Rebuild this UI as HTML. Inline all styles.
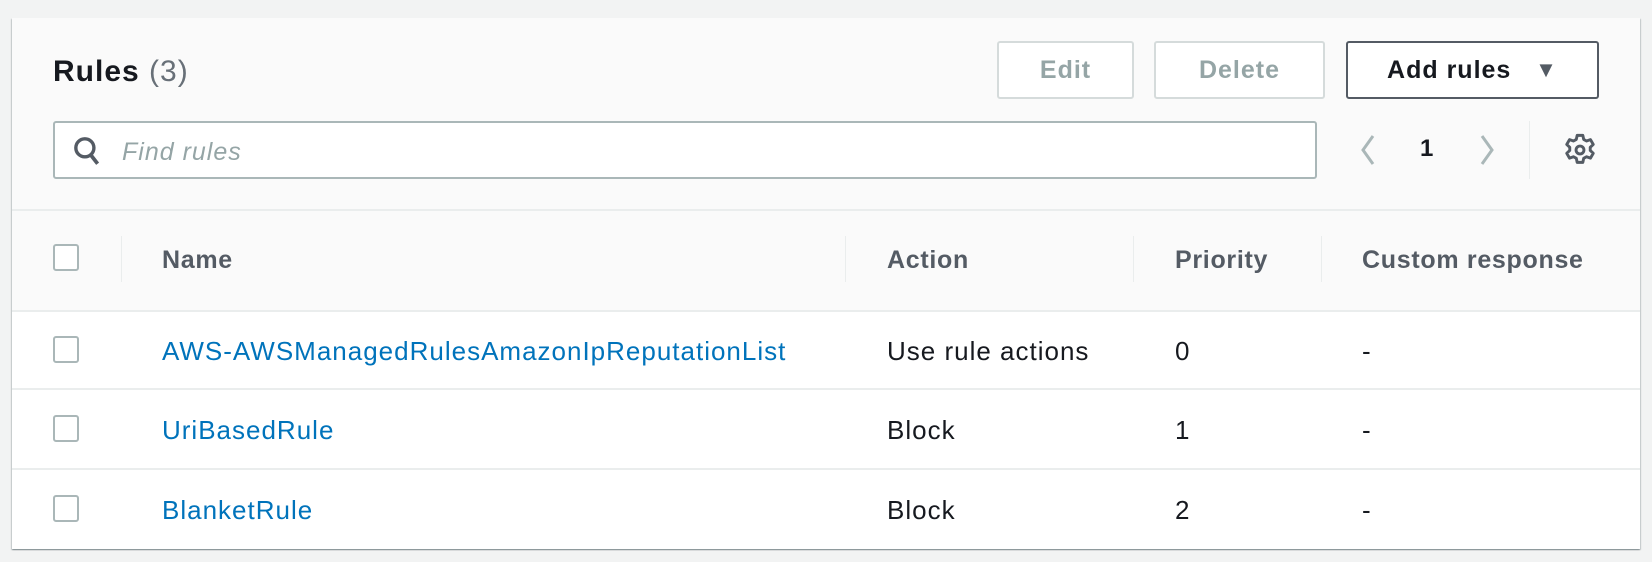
<!DOCTYPE html>
<html><head><style>
*{box-sizing:border-box;margin:0;padding:0}
body{width:1652px;height:562px;background:#f2f3f3;font-family:"Liberation Sans",sans-serif;position:relative;overflow:hidden}
.card{position:absolute;left:12px;top:18px;width:1628px;height:531px;background:#fff;box-shadow:0 1px 1px rgba(0,28,36,.3),1px 1px 1px rgba(0,28,36,.15),-1px 1px 1px rgba(0,28,36,.15)}
.hdr{position:absolute;left:0;top:0;width:100%;height:193px;background:#fafafa;border-bottom:2px solid #eaeded}
.th{position:absolute;left:0;top:193px;width:100%;height:101px;background:#fafafa;border-bottom:2px solid #eaeded}
.a{position:absolute}
.btn{position:absolute;top:23px;height:58px;border:2px solid #d5dbdb;border-radius:3px;background:#fff;color:#95a5a6;font-weight:bold;font-size:25px;letter-spacing:1px;display:flex;align-items:center;justify-content:center}
.cb{position:absolute;width:26px;height:27px;border:2px solid #aab7b8;border-radius:3px;background:#fff}
.div{position:absolute;width:1px;background:#eaeded;top:218px;height:46px}
.col{position:absolute;font-weight:bold;font-size:25px;letter-spacing:0.7px;color:#545b64;line-height:30px}
.cell{position:absolute;font-size:26px;letter-spacing:1px;color:#16191f;line-height:30px}
.lnk{position:absolute;font-size:26px;letter-spacing:1px;color:#0073bb;line-height:30px}
.row{position:absolute;left:0;width:100%;height:2px;background:#eaeded}
</style></head><body>
<div class="card">
<div class="hdr"></div>
<div class="th"></div>
<div class="a" style="left:41px;top:36px;line-height:36px;font-size:30px;letter-spacing:1px;font-weight:bold;color:#16191f">Rules <span style="font-weight:normal;color:#687078">(3)</span></div>
<div class="btn" style="left:985px;width:137px">Edit</div>
<div class="btn" style="left:1142px;width:171px">Delete</div>
<div class="btn" style="left:1334px;width:253px;border-color:#545b64;color:#16191f">Add rules&nbsp;&nbsp;&nbsp;<span style="font-size:22px;color:#545b64">▼</span></div>
<div class="a" style="left:41px;top:103px;width:1264px;height:58px;border:2px solid #aab7b8;border-radius:3px;background:#fff"></div>
<svg class="a" style="left:58px;top:116px" width="34" height="34" viewBox="0 0 32 32"><circle cx="14" cy="13" r="8.5" fill="none" stroke="#545b64" stroke-width="3.2"/><line x1="19" y1="19" x2="26" y2="28" stroke="#545b64" stroke-width="3.5"/></svg>
<div class="a" style="left:110px;top:119px;line-height:30px;font-size:25px;letter-spacing:1px;font-style:italic;color:#95a5a6">Find rules</div>
<svg class="a" style="left:1344px;top:115px" width="24" height="34" viewBox="0 0 24 34"><path d="M17 3 L7 17 L17 31" fill="none" stroke="#aab7b8" stroke-width="3"/></svg>
<div class="a" style="left:1408px;top:117px;font-size:24px;font-weight:bold;color:#16191f">1</div>
<svg class="a" style="left:1463px;top:115px" width="24" height="34" viewBox="0 0 24 34"><path d="M7 3 L17 17 L7 31" fill="none" stroke="#aab7b8" stroke-width="3"/></svg>
<div class="a" style="left:1517px;top:103px;width:1px;height:58px;background:#eaeded"></div>
<svg class="a" style="left:1550px;top:114px" width="36" height="36" viewBox="0 0 32 32"><path d="M13.5 3h5l.8 3.6 2.5 1.4 3.5-1.2 2.5 4.3-2.7 2.5v2.8l2.7 2.5-2.5 4.3-3.5-1.2-2.5 1.4-.8 3.6h-5l-.8-3.6-2.5-1.4-3.5 1.2-2.5-4.3 2.7-2.5v-2.8L4.2 11.1l2.5-4.3 3.5 1.2 2.5-1.4z" fill="none" stroke="#545b64" stroke-width="2.6" stroke-linejoin="round"/><circle cx="16" cy="16" r="3.5" fill="none" stroke="#545b64" stroke-width="2.6"/></svg>
<div class="cb" style="left:41px;top:226px"></div>
<div class="div" style="left:109px"></div>
<div class="div" style="left:833px"></div>
<div class="div" style="left:1121px"></div>
<div class="div" style="left:1309px"></div>
<div class="col" style="left:150px;top:227px">Name</div>
<div class="col" style="left:875px;top:227px">Action</div>
<div class="col" style="left:1163px;top:227px">Priority</div>
<div class="col" style="left:1350px;top:227px">Custom response</div>
<div class="row" style="top:370px"></div>
<div class="row" style="top:450px"></div>
<div class="cb" style="left:41px;top:318px"></div>
<div class="lnk" style="left:150px;top:318px">AWS-AWSManagedRulesAmazonIpReputationList</div>
<div class="cell" style="left:875px;top:318px">Use rule actions</div>
<div class="cell" style="left:1163px;top:318px">0</div>
<div class="cell" style="left:1350px;top:318px">-</div>
<div class="cb" style="left:41px;top:397px"></div>
<div class="lnk" style="left:150px;top:397px">UriBasedRule</div>
<div class="cell" style="left:875px;top:397px">Block</div>
<div class="cell" style="left:1163px;top:397px">1</div>
<div class="cell" style="left:1350px;top:397px">-</div>
<div class="cb" style="left:41px;top:477px"></div>
<div class="lnk" style="left:150px;top:477px">BlanketRule</div>
<div class="cell" style="left:875px;top:477px">Block</div>
<div class="cell" style="left:1163px;top:477px">2</div>
<div class="cell" style="left:1350px;top:477px">-</div>
</div>
</body></html>
